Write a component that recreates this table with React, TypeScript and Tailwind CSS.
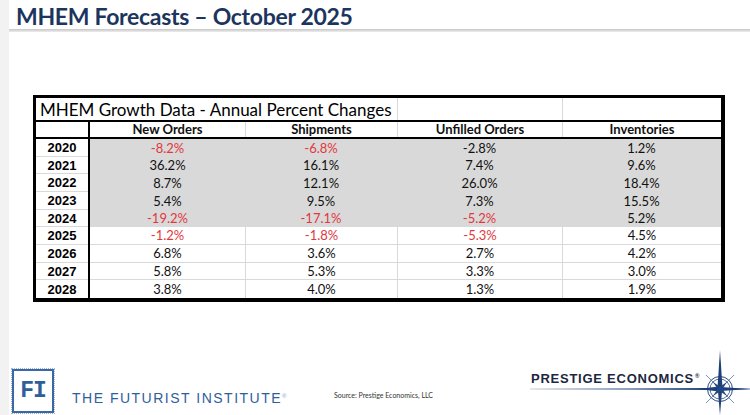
import React from 'react';

type Row = {
  year: string;
  values: string[];
  red: boolean[];
  shaded: boolean;
  h: string;
};

const rows: Row[] = [
  { year: '2020', values: ['-8.2%', '-6.8%', '-2.8%', '1.2%'], red: [true, true, false, false], shaded: true, h: 'h-[18px]' },
  { year: '2021', values: ['36.2%', '16.1%', '7.4%', '9.6%'], red: [false, false, false, false], shaded: true, h: 'h-[17px]' },
  { year: '2022', values: ['8.7%', '12.1%', '26.0%', '18.4%'], red: [false, false, false, false], shaded: true, h: 'h-[18px]' },
  { year: '2023', values: ['5.4%', '9.5%', '7.3%', '15.5%'], red: [false, false, false, false], shaded: true, h: 'h-[18px]' },
  { year: '2024', values: ['-19.2%', '-17.1%', '-5.2%', '5.2%'], red: [true, true, true, false], shaded: true, h: 'h-[17px]' },
  { year: '2025', values: ['-1.2%', '-1.8%', '-5.3%', '4.5%'], red: [true, true, true, false], shaded: false, h: 'h-[18px]' },
  { year: '2026', values: ['6.8%', '3.6%', '2.7%', '4.2%'], red: [false, false, false, false], shaded: false, h: 'h-[18px]' },
  { year: '2027', values: ['5.8%', '5.3%', '3.3%', '3.0%'], red: [false, false, false, false], shaded: false, h: 'h-[17px]' },
  { year: '2028', values: ['3.8%', '4.0%', '1.3%', '1.9%'], red: [false, false, false, false], shaded: false, h: 'h-[18px]' },
];

const colWidths = ['w-[155px]', 'w-[152px]', 'w-[165px]', 'w-[159px]'];
const headers = ['New Orders', 'Shipments', 'Unfilled Orders', 'Inventories'];

function GrowthTable() {
  return (
    <div className="w-[692px] border-t-[3px] border-l-[3px] border-r-4 border-b-4 border-black bg-white font-['Lato',sans-serif] text-[13px] text-[#111]">
      {/* title row */}
      <div className="flex h-[22px]">
        <div className="w-[361px] pl-[4px] flex items-center text-[17px] leading-none text-black">
          MHEM Growth Data - Annual Percent Changes
        </div>
        <div className="w-[165px] border-l border-[#d9d9d9]" />
        <div className="w-[159px] border-l border-[#d9d9d9]" />
      </div>
      <div className="h-[2px] bg-black" />
      {/* column headers */}
      <div className="flex h-[15px]">
        <div className="w-[52px]" />
        <div className="w-[2px] bg-black" />
        {headers.map((label, i) => (
          <div
            key={label}
            className={`${colWidths[i]} ${i > 0 ? 'border-l border-[#d9d9d9]' : ''} flex items-center justify-center font-bold leading-none`}
          >
            {label}
          </div>
        ))}
      </div>
      <div className="h-[2px] bg-black" />
      {rows.map((row, r) => {
        const last = r === rows.length - 1;
        return (
          <div key={row.year} className={`flex ${row.h}`}>
            <div
              className={`w-[52px] flex items-center justify-center font-['Liberation_Sans',sans-serif] font-bold leading-none text-black ${last ? '' : 'border-b border-[#d9d9d9]'}`}
            >
              {row.year}
            </div>
            <div className="w-[2px] bg-black" />
            {row.values.map((v, i) => (
              <div
                key={i}
                className={`${colWidths[i]} flex items-center justify-center leading-none ${
                  row.shaded ? 'bg-[#d9d9d9]' : 'bg-white'
                } ${!row.shaded && i > 0 ? 'border-l border-[#d9d9d9]' : ''} ${
                  !row.shaded && !last ? 'border-b border-[#d9d9d9]' : ''
                } ${row.red[i] ? 'text-[#e2373d]' : ''}`}
              >
                {v}
              </div>
            ))}
          </div>
        );
      })}
    </div>
  );
}

function PrestigeLogo() {
  return (
    <div className="relative w-[226px] h-[65px]">
      <svg width="226" height="65" viewBox="0 0 226 65" className="absolute left-0 top-0">
        <defs>
          <linearGradient id="pe-line" x1="0" x2="1" y1="0" y2="0">
            <stop offset="0" stopColor="#e8e8e8" />
            <stop offset="0.45" stopColor="#8ea0bd" />
            <stop offset="0.8" stopColor="#24477f" />
            <stop offset="1" stopColor="#b7c3d6" />
          </linearGradient>
        </defs>
        <rect x="6" y="38" width="220" height="2" fill="url(#pe-line)" />
        <circle cx="196" cy="39" r="12.5" fill="none" stroke="#2a4c84" strokeWidth="1" />
        <circle cx="196" cy="39" r="10" fill="none" stroke="#2a4c84" strokeWidth="0.8" />
        <g stroke="#5b78a6" strokeWidth="0.8">
          <line x1="182" y1="25" x2="210" y2="53" />
          <line x1="210" y1="25" x2="182" y2="53" />
        </g>
        <polygon points="196,0 198.4,36.6 196,65 193.6,36.6" fill="#1d3f7a" />
        <polygon points="174,39 193,36.8 226,39 193,41.2" fill="#1d3f7a" />
        <polygon points="189,32 197.5,37.5 203,46 194.5,40.5" fill="#24477f" />
        <polygon points="203,32 197.5,40.5 189,46 194.5,37.5" fill="#24477f" />
      </svg>
      <div className="absolute left-[7px] top-[22px] font-['Liberation_Sans',sans-serif] font-bold text-[13px] leading-none tracking-[0.75px] text-[#1c2740]">
        PRESTIGE ECONOMICS<span className="relative top-[-5px] ml-[1px] text-[6px]">®</span>
      </div>
    </div>
  );
}

export default function App() {
  return (
    <div className="w-[750px] h-[415px] flex bg-white overflow-hidden">
      <div className="w-[9px] h-full bg-[#f2f2f2]" />
      <div className="flex-1 flex flex-col">
        <div className="h-[29px] pl-[7px] pt-[3px]">
          <h1 className="font-['Lato',sans-serif] font-bold text-[23px] leading-[26px] tracking-[-0.3px] text-[#1c355e]">
            MHEM Forecasts – October 2025
          </h1>
        </div>
        <div className="h-[3px] bg-linear-to-b from-[#c6c6c6] to-[#ededed]" />
        <div className="mt-[63px] ml-[24px]">
          <GrowthTable />
        </div>
        <div className="mt-[48px] flex h-[65px]">
          <div className="w-[60px] pl-[3px] pt-[19px]">
            <div className="w-[42px] h-[44px] border-2 border-[#3a67a6] outline outline-1 outline-dotted outline-[#9fb4d4] flex items-center justify-center">
              <span className="font-['Liberation_Mono',monospace] font-bold text-[23px] leading-none text-[#2f5e9c] tracking-[-1px]">
                FI
              </span>
            </div>
          </div>
          <div className="w-[265px] pl-[3px] pt-[35px]">
            <span className="font-['Liberation_Sans',sans-serif] text-[14px] leading-none tracking-[1.5px] text-[#2f5e9c]">
              THE FUTURIST INSTITUTE
              <span className="relative top-[-5px] text-[6px] text-[#7f9cc4]">®</span>
            </span>
          </div>
          <div className="w-[190px] pt-[30px]">
            <span className="font-['Lato',sans-serif] text-[7px] leading-none text-[#333]">
              Source: Prestige Economics, LLC
            </span>
          </div>
          <PrestigeLogo />
        </div>
      </div>
    </div>
  );
}
